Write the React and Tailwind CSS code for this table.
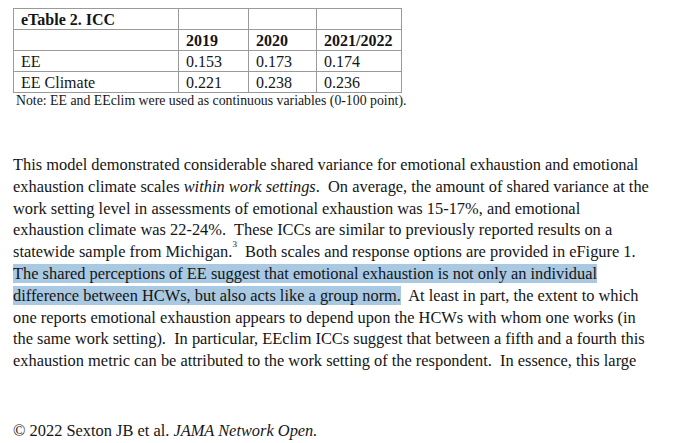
import React from 'react';

const serif = { fontFamily: '"Liberation Serif", "Times New Roman", serif' };

const rows = [
  { label: 'EE', values: ['0.153', '0.173', '0.174'] },
  { label: 'EE Climate', values: ['0.221', '0.238', '0.236'] },
];

const cell = 'border border-[#9a9a9a] pl-[7px] pr-1 pt-[2px] pb-0 h-[21px] leading-[18px] align-top text-left';

const App = () => {
  return (
    <div className="w-[680px] h-[443px] bg-white text-[#151515] overflow-hidden" style={serif}>
      {/* eTable 2 */}
      <div className="pt-[8px] pl-[13px]">
        <table className="border-collapse text-[16px]">
          <colgroup>
            <col className="w-[165px]" />
            <col className="w-[70px]" />
            <col className="w-[68px]" />
            <col className="w-[85px]" />
          </colgroup>
          <tbody>
            <tr>
              <td className={`${cell} font-bold`}>eTable 2. ICC</td>
              <td className={cell}></td>
              <td className={cell}></td>
              <td className={cell}></td>
            </tr>
            <tr>
              <td className={cell}></td>
              <td className={`${cell} font-bold`}>2019</td>
              <td className={`${cell} font-bold`}>2020</td>
              <td className={`${cell} font-bold`}>2021/2022</td>
            </tr>
            {rows.map((r) => (
              <tr key={r.label}>
                <td className={cell}>{r.label}</td>
                {r.values.map((v) => (
                  <td key={v} className={cell}>{v}</td>
                ))}
              </tr>
            ))}
          </tbody>
        </table>
        <p className="pl-[3px] text-[13.8px] leading-[16px]">
          Note: EE and EEclim were used as continuous variables (0-100 point).
        </p>
      </div>

      {/* body paragraph, line by line as in the page */}
      <div className="mt-[45px] pl-[13px] text-[16.4px] leading-[21.8px] whitespace-pre">
        <div>This model demonstrated considerable shared variance for emotional exhaustion and emotional</div>
        <div>exhaustion climate scales <i>within work settings</i>.  On average, the amount of shared variance at the</div>
        <div>work setting level in assessments of emotional exhaustion was 15-17%, and emotional</div>
        <div>exhaustion climate was 22-24%.  These ICCs are similar to previously reported results on a</div>
        <div>
          statewide sample from Michigan.<sup className="text-[9px] align-[6px] leading-none">3</sup>  Both scales and response options are provided in eFigure 1.
        </div>
        <div>
          <span className="bg-[#a9c8e2]">The shared perceptions of EE suggest that emotional exhaustion is not only an individual</span>
        </div>
        <div>
          <span className="bg-[#a9c8e2]">difference between HCWs, but also acts like a group norm.</span>  At least in part, the extent to which
        </div>
        <div>one reports emotional exhaustion appears to depend upon the HCWs with whom one works (in</div>
        <div>the same work setting).  In particular, EEclim ICCs suggest that between a fifth and a fourth this</div>
        <div>exhaustion metric can be attributed to the work setting of the respondent.  In essence, this large</div>
      </div>

      <div className="mt-[48px] pl-[13px] text-[16.4px] leading-[21.8px]">
        © 2022 Sexton JB et al. <i>JAMA Network Open.</i>
      </div>
    </div>
  );
};

export default App;
